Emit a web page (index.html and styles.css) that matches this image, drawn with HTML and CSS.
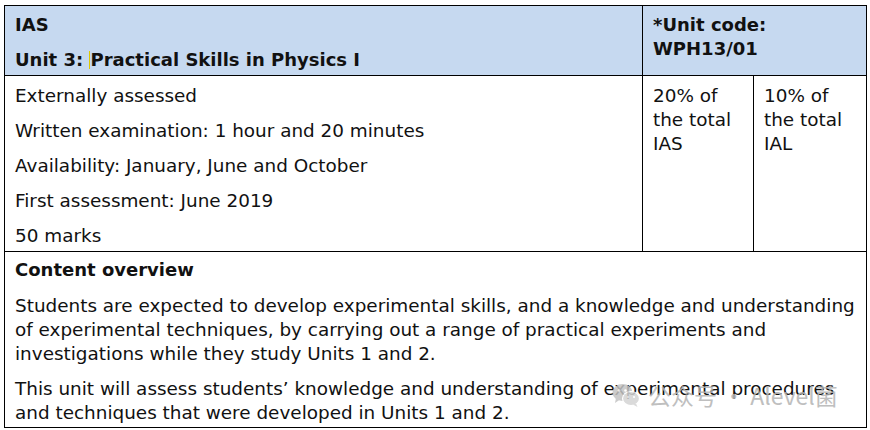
FILE: index.html
```html
<!DOCTYPE html>
<html>
<head>
<meta charset="utf-8">
<link rel="stylesheet" href="styles.css">
</head>
<body>
<div class="page">
  <table class="spec">
    <colgroup>
      <col class="c1">
      <col class="c2">
      <col class="c3">
    </colgroup>
    <tr class="head">
      <td class="hcell">
        <p>IAS</p>
        <p>Unit 3: <span class="cursor"></span>Practical Skills in Physics I</p>
      </td>
      <td class="hcell code" colspan="2">
        <p>*Unit code:<br>WPH13/01</p>
      </td>
    </tr>
    <tr class="info">
      <td class="cell">
        <p>Externally assessed</p>
        <p>Written examination: 1 hour and 20 minutes</p>
        <p>Availability: January, June and October</p>
        <p>First assessment: June 2019</p>
        <p>50 marks</p>
      </td>
      <td class="cell narrow"><p>20% of the total IAS</p></td>
      <td class="cell narrow"><p>10% of the total IAL</p></td>
    </tr>
    <tr class="overview">
      <td class="cell ov" colspan="3">
        <p class="title">Content overview</p>
        <p>Students are expected to develop experimental skills, and a knowledge and understanding of experimental techniques, by carrying out a range of practical experiments and investigations while they study Units 1 and 2.</p>
        <p>This unit will assess students’ knowledge and understanding of experimental procedures and techniques that were developed in Units 1 and 2.</p>
      </td>
    </tr>
  </table>
  <div class="watermark">
    <svg class="wx" width="28" height="24" viewBox="0 0 28 24">
      <ellipse cx="10.5" cy="9.5" rx="10" ry="8.5" fill="#c4c4c4"/>
      <path d="M4 15 L3 20 L8 16.5 Z" fill="#c4c4c4"/>
      <ellipse cx="19" cy="15.5" rx="8.5" ry="7" fill="#d4d4d4" stroke="#fff" stroke-width="1.2"/>
      <path d="M24 20.5 L25.5 24 L21 21.5 Z" fill="#d4d4d4"/>
      <circle cx="7" cy="7.5" r="1.3" fill="#fff"/>
      <circle cx="13.5" cy="7.5" r="1.3" fill="#fff"/>
      <circle cx="16" cy="14" r="1.1" fill="#fff"/>
      <circle cx="22" cy="14" r="1.1" fill="#fff"/>
    </svg>
    <span class="wtext">公众号 · Alevel菌</span>
  </div>
</div>
</body>
</html>
```
FILE: styles.css
```css
html, body {
  margin: 0;
  padding: 0;
  background: #fff;
}
.page {
  position: relative;
  padding: 5px 0 0 4px;
  font-family: "DejaVu Sans", Verdana, sans-serif;
  font-size: 18.4px;
  color: #111;
}
.spec {
  border-collapse: collapse;
  table-layout: fixed;
  width: 862px;
}
.c1 { width: 638px; }
.c2 { width: 111px; }
.c3 { width: 113px; }
.spec td {
  border: 1px solid #000;
  vertical-align: top;
  padding: 0 10px;
}
.spec p {
  margin: 0 0 11px;
  line-height: 24px;
}
.spec p:last-child { margin-bottom: 0; }
.head td {
  background: #c6d9f0;
  font-weight: bold;
  font-size: 18px;
  height: 70px;
  padding-top: 7px;
  box-sizing: border-box;
}
.cursor {
  display: inline-block;
  width: 1px;
  height: 18px;
  background: #e0c800;
  vertical-align: -3px;
}
.info td {
  height: 176px;
  padding-top: 8px;
  box-sizing: border-box;
}
.overview td {
  height: 176px;
  padding-top: 6px;
  box-sizing: border-box;
}
.spec .title { font-weight: bold; font-size: 18px; margin-bottom: 12px; }
.watermark {
  position: absolute;
  left: 612px;
  top: 378px;
  display: flex;
  align-items: center;
  gap: 8px;
  opacity: 0.85;
}
.wtext {
  font-family: "Noto Sans CJK SC", "DejaVu Sans", sans-serif;
  font-size: 23px;
  color: #b4b4b4;
}
```
